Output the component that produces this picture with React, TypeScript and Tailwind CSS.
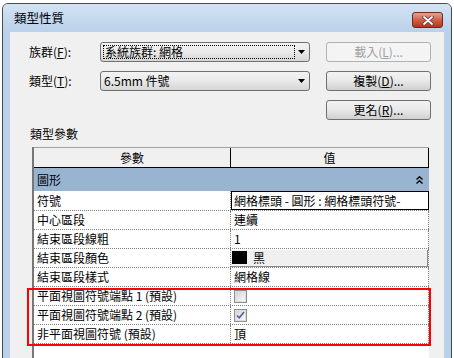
import clsx from "clsx";
import type { ReactNode } from "react";

function Combo({ text, focused }: { text: string; focused?: boolean }) {
  return (
    <div className="flex h-[20px] w-[210px] items-center rounded-[3px] border border-[#707070] bg-gradient-to-b from-[#f3f3f3] via-[#e9e9e9] to-[#d6d6d6] pl-[2px] pr-[2px]">
      <div
        className={clsx(
          "flex h-[14px] w-[192px] items-center pl-[1px] leading-[12px]",
          focused && "border border-dotted border-black"
        )}
      >
        {text}
      </div>
      <svg width="7" height="4" viewBox="0 0 7 4" className="ml-auto mr-[2px]">
        <path d="M0 0 H7 L3.5 4 Z" fill="#000" />
      </svg>
    </div>
  );
}

function Btn({ children, disabled }: { children: ReactNode; disabled?: boolean }) {
  return (
    <div
      className={clsx(
        "flex h-[20px] w-[105px] items-center justify-center rounded-[3px] border",
        disabled
          ? "border-[#adb2b5] bg-[#f4f4f4] text-[#a0a0a0]"
          : "border-[#707070] bg-gradient-to-b from-[#f2f2f2] via-[#e8e8e8] to-[#d0d0d0] text-black"
      )}
    >
      {children}
    </div>
  );
}

function Check({ checked }: { checked?: boolean }) {
  return (
    <div className="flex h-[13px] w-[13px] items-center justify-center border border-[#8f8f8f] bg-white">
      <div className="flex h-[11px] w-[11px] items-center justify-center border border-[#dedede] bg-gradient-to-br from-[#d4d4d4] to-[#fafafa]">
        {checked && (
          <svg width="9" height="8" viewBox="0 0 9 8">
            <path d="M1 4.5 L3.3 6.8 L8 1" fill="none" stroke="#4e5fa8" strokeWidth="1.6" />
          </svg>
        )}
      </div>
    </div>
  );
}

function Row({ label, children, tall }: { label: string; children?: ReactNode; tall?: boolean }) {
  return (
    <div
      className={clsx(
        "flex border-b border-dotted border-[#808080]",
        tall ? "h-[20px]" : "h-[19px]"
      )}
    >
      <div className="flex w-[197px] items-center border-r border-dotted border-[#808080] pl-[3px] leading-[12px]">
        {label}
      </div>
      <div className="flex flex-1 items-center border-r border-dotted border-[#808080] leading-[12px]">
        {children}
      </div>
    </div>
  );
}

export default function App() {
  return (
    <div className="h-[358px] w-[454px] overflow-hidden bg-white font-['Noto_Sans_CJK_TC','Liberation_Sans',sans-serif] text-[12px] text-black">
      <div className="ml-[2px] mt-[3px] flex h-[380px] w-[450px] flex-col rounded-t-[6px] border border-[#4a4a4a] bg-[#b9d1ea]">
        <div className="flex h-[28px] shrink-0 items-start rounded-t-[5px] bg-gradient-to-b from-[#d3e3f3] to-[#b9d1ea] pl-[11px] pr-[8px]">
          <span className="mt-[7px] text-[12.5px] leading-[14px]">類型性質</span>
          <div className="ml-auto mt-[8px] flex h-[16px] w-[31px] items-center justify-center rounded-[3px] border border-[#6e2a1f] bg-gradient-to-b from-[#e6a192] via-[#cf5f48] to-[#b8321c]">
            <svg width="12" height="9" viewBox="0 0 12 9">
              <path d="M2 1 L10 8 M10 1 L2 8" stroke="#5a3a34" strokeWidth="3.4" strokeLinecap="round" />
              <path d="M2 1 L10 8 M10 1 L2 8" stroke="#ffffff" strokeWidth="1.8" strokeLinecap="round" />
            </svg>
          </div>
        </div>

        <div className="mx-[7px] flex flex-1 flex-col bg-[#f0f0f0] pt-[10px]">
          <div className="flex h-[20px] items-center">
            <span className="w-[90px] pl-[19px] leading-[12px]">
              族群(<span className="underline">F</span>):
            </span>
            <Combo text="系統族群: 網格" focused />
            <div className="ml-[16px]">
              <Btn disabled>
                載入(<span className="underline">L</span>)...
              </Btn>
            </div>
          </div>
          <div className="mt-[9px] flex h-[20px] items-center">
            <span className="w-[90px] pl-[19px] leading-[12px]">
              類型(<span className="underline">T</span>):
            </span>
            <Combo text="6.5mm 件號" />
            <div className="ml-[16px]">
              <Btn>
                複製(<span className="underline">D</span>)...
              </Btn>
            </div>
          </div>
          <div className="mt-[9px] flex h-[20px] items-center">
            <div className="ml-[316px]">
              <Btn>
                更名(<span className="underline">R</span>)...
              </Btn>
            </div>
          </div>

          <div className="mt-[6px] h-[16px] pl-[20px] leading-[16px]">類型參數</div>

          <div className="ml-[22px] mt-[5px] flex w-[397px] flex-1 flex-col border-l-2 border-[#777777] bg-white">
            <div className="flex h-[21px] border-t border-b border-t-[#a0a0a0] border-b-black bg-[#f0f0f0]">
              <div className="flex w-[197px] items-center justify-center border-r border-black leading-[12px]">參數</div>
              <div className="flex flex-1 items-center justify-center border-r border-black leading-[12px]">值</div>
            </div>
            <div className="flex h-[23px] items-center bg-[#99b4d1] pl-[3px] pr-[6px] leading-[12px]">
              圖形
              <svg width="7" height="8" viewBox="0 0 7 8" className="ml-auto">
                <path d="M0.5 3.5 L3.5 0.8 L6.5 3.5 M0.5 7.5 L3.5 4.8 L6.5 7.5" fill="none" stroke="#000" strokeWidth="1.4" />
              </svg>
            </div>
            <div className="flex h-[20px] border-b border-dotted border-[#808080]">
              <div className="flex w-[197px] items-center border-r border-dotted border-[#808080] pl-[3px] leading-[12px]">
                符號
              </div>
              <div className="flex min-w-0 flex-1 items-center overflow-hidden whitespace-nowrap border border-black pl-[2px] leading-[12px]">
                網格標頭 - 圓形 : 網格標頭符號-
              </div>
            </div>
            <Row label="中心區段">
              <span className="pl-[3px]">連續</span>
            </Row>
            <Row label="結束區段線粗">
              <span className="pl-[3px]">1</span>
            </Row>
            <Row label="結束區段顏色">
              <div className="flex h-[17px] flex-1 items-center border-b border-r border-b-[#8a8a8a] border-r-[#8a8a8a] bg-[#f0f0f0]">
                <div className="ml-[1px] h-[13px] w-[15px] bg-black" />
                <span className="ml-[6px]">黑</span>
              </div>
            </Row>
            <Row label="結束區段樣式">
              <span className="pl-[3px]">網格線</span>
            </Row>
            <div className="relative">
              <Row label="平面視圖符號端點 1 (預設)">
                <div className="pl-[3px]">
                  <Check />
                </div>
              </Row>
              <Row label="平面視圖符號端點 2 (預設)">
                <div className="pl-[3px]">
                  <Check checked />
                </div>
              </Row>
              <Row label="非平面視圖符號 (預設)">
                <span className="pl-[3px]">頂</span>
              </Row>
              <div className="pointer-events-none absolute -bottom-[2px] -left-[7px] -right-[2px] top-[1px] border-2 border-[#ff0000]" />
            </div>
          </div>
        </div>
      </div>
    </div>
  );
}
